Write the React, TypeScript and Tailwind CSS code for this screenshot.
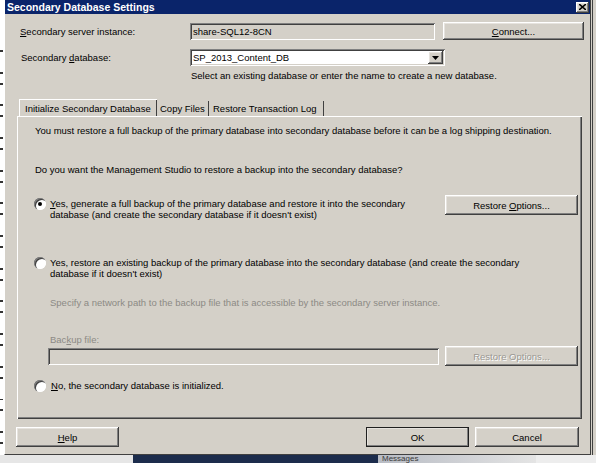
import type { ReactNode } from "react";

// Classic 3D bevels used throughout the dialog
const raised =
  "bg-[#d4d0c8] shadow-[inset_-1px_-1px_#404040,inset_1px_1px_#ffffff,inset_-2px_-2px_#808080,inset_2px_2px_#e6e3de]";
const sunken =
  "shadow-[inset_1px_1px_#808080,inset_-1px_-1px_#ffffff,inset_2px_2px_#404040,inset_-2px_-2px_#d4d0c8]";

function Btn({
  children,
  className = "",
  disabled = false,
  isDefault = false,
}: {
  children: ReactNode;
  className?: string;
  disabled?: boolean;
  isDefault?: boolean;
}) {
  return (
    <div
      className={`${raised} flex shrink-0 items-center justify-center ${
        isDefault ? "outline outline-1 outline-[#202020] -outline-offset-1" : ""
      } ${disabled ? "text-[#9a9893] [text-shadow:1px_1px_0_#ffffff]" : "text-black"} ${className}`}
    >
      <span className="whitespace-nowrap">{children}</span>
    </div>
  );
}

function Radio({ checked = false }: { checked?: boolean }) {
  return (
    <div className="relative h-[12px] w-[12px] shrink-0 rounded-full bg-white shadow-[inset_1px_1px_#808080,inset_2px_2px_#404040,inset_-1px_-1px_#ffffff]">
      {checked && (
        <div className="absolute left-[4px] top-[4px] h-[4px] w-[4px] rounded-full bg-black" />
      )}
    </div>
  );
}

function U({ children }: { children: ReactNode }) {
  return <span className="underline underline-offset-1">{children}</span>;
}

export default function App() {
  return (
    <div className="flex h-[463px] w-[596px] flex-col overflow-hidden bg-[#e9e9e9] font-['Liberation_Sans',Arial,sans-serif] text-[9.5px] leading-[11px] text-black">
      <div className="flex h-[455px] shrink-0">
        {/* window behind, left */}
        <div className="flex w-[4px] shrink-0 flex-col gap-[9px] bg-white pt-[50px]">
          {[0, 1, 2, 3, 4, 5, 6, 7, 8, 9, 10, 11, 12, 13, 14, 15, 16, 17, 18, 19, 20, 21, 22, 23, 24, 25, 26, 27, 28, 29, 30, 31, 32, 33, 34, 35, 36, 37].map((i) => (
            <div key={i} className={`h-[3px] w-[3px] ${i % 3 === 1 ? "bg-transparent" : "bg-[#333]"}`} />
          ))}
        </div>

        {/* dialog */}
        <div className="flex w-[587px] shrink-0 flex-col border-b border-r border-b-[#404040] border-r-[#404040] border-l border-l-white bg-[#d4d0c8]">
          <div className="flex h-[14px] shrink-0 items-center justify-between bg-[#0a246a] pl-[2px] pr-[1px]">
            <span className="text-[10.5px] font-bold text-white">Secondary Database Settings</span>
            <div className={`${raised} flex h-[11px] w-[13px] items-center justify-center`}>
              <svg width="7" height="6" viewBox="0 0 7 6">
                <path d="M0 0 L7 6 M7 0 L0 6" stroke="#000" strokeWidth="1.6" />
              </svg>
            </div>
          </div>

          <div className="flex flex-col pl-[15px]">
            <div className="mt-[8px] flex items-center">
              <span className="w-[170px]">
                <U>S</U>econdary server instance:
              </span>
              <div className={`${sunken} flex h-[17px] w-[245px] items-center bg-[#d4d0c8] pl-[3px]`}>
                share-SQL12-8CN
              </div>
              <Btn className="ml-[8px] h-[18px] w-[141px]">
                <U>C</U>onnect...
              </Btn>
            </div>

            <div className="mt-[9px] flex items-center">
              <span className="w-[170px] pl-[1px]">
                Secondary <U>d</U>atabase:
              </span>
              <div className={`${sunken} flex h-[17px] w-[255px] items-center justify-between bg-white pl-[3px] pr-[2px]`}>
                <span>SP_2013_Content_DB</span>
                <div className={`${raised} flex h-[13px] w-[15px] items-center justify-center`}>
                  <svg width="7" height="4" viewBox="0 0 7 4">
                    <path d="M0 0 H7 L3.5 4 Z" fill="#000" />
                  </svg>
                </div>
              </div>
            </div>

            <div className="mt-[4px] pl-[171px]">
              Select an existing database or enter the name to create a new database.
            </div>
          </div>

          {/* tabs */}
          <div className="mt-[19px] flex h-[16px] items-end whitespace-nowrap pl-[14px]">
            <div className="flex h-[17px] w-[138px] items-center border-l border-t border-l-white border-t-white pl-[5px] shadow-[inset_-1px_0_#404040]">
              Initialize Secondary Database
            </div>
            <div className="flex h-[15px] w-[52px] items-center border-r border-r-[#404040] pl-[3px]">
              Copy Files
            </div>
            <div className="flex h-[15px] w-[115px] items-center border-r border-r-[#404040] pl-[4px]">
              Restore Transaction Log
            </div>
          </div>

          <div className="ml-[12px] flex h-[303px] w-[565px] flex-col whitespace-nowrap border-l border-t border-l-white border-t-white pl-[16px] pr-[4px] shadow-[inset_-1px_-1px_#404040,inset_-2px_-2px_#808080]">
            <div className="mt-[8px] pl-[1px]">
              You must restore a full backup of the primary database into secondary database before it can be a log shipping destination.
            </div>
            <div className="mt-[28px] pl-[1px]">
              Do you want the Management Studio to restore a backup into the secondary database?
            </div>

            <div className="mt-[20px] flex items-start justify-between">
              <div className="mt-[3px] flex gap-[4px]">
                <Radio checked />
                <span>
                  <U>Y</U>es, generate a full backup of the primary database and restore it into the secondary
                  <br />
                  database (and create the secondary database if it doesn't exist)
                </span>
              </div>
              <Btn className="h-[20px] w-[133px]">
                Restore <U>O</U>ptions...
              </Btn>
            </div>

            <div className="mt-[37px] flex gap-[4px]">
              <Radio />
              <span>
                Yes, restore an existing backup of the primary database into the secondary database (and create the secondary
                <br />
                database if it doesn't exist)
              </span>
            </div>

            <div className="mt-[18px] pl-[16px] text-[#8c8a85]">
              Specify a network path to the backup file that is accessible by the secondary server instance.
            </div>
            <div className="mt-[26px] pl-[16px] text-[#8c8a85]">
              Bac<U>k</U>up file:
            </div>
            <div className="mt-[1px] flex items-center justify-between pl-[14px]">
              <div className={`${sunken} h-[17px] w-[391px] bg-[#d4d0c8]`} />
              <Btn disabled className="h-[20px] w-[133px]">
                Restore Options...
              </Btn>
            </div>

            <div className="mt-[14px] flex gap-[5px]">
              <Radio />
              <span>
                <U>N</U>o, the secondary database is initialized.
              </span>
            </div>
          </div>

          <div className="mt-[8px] flex items-center pl-[11px]">
            <Btn className="h-[20px] w-[103px]">
              <U>H</U>elp
            </Btn>
            <Btn isDefault className="ml-[247px] h-[20px] w-[103px]">
              OK
            </Btn>
            <Btn className="ml-[6px] h-[20px] w-[104px]">Cancel</Btn>
          </div>
        </div>

        {/* window behind, right */}
        <div className="flex w-[5px] shrink-0 bg-[#d4d0c8] pl-[1px]">
          <div className="w-[1px] bg-[#404040]" />
        </div>
      </div>

      {/* taskbar-ish strip behind the dialog */}
      <div className="flex h-[8px] shrink-0">
        <div className="w-[133px] bg-[#e6e6e6]" />
        <div className="w-[245px] bg-[#1c2c4c]" />
        <div className="flex w-[158px] items-start bg-gradient-to-r from-[#b8bcc4] to-[#e4e4e4] pl-[4px] text-[8px] leading-[8px] text-[#3a3a3a]">
          Messages
        </div>
        <div className="flex-1 bg-[#ededed]" />
      </div>
    </div>
  );
}
